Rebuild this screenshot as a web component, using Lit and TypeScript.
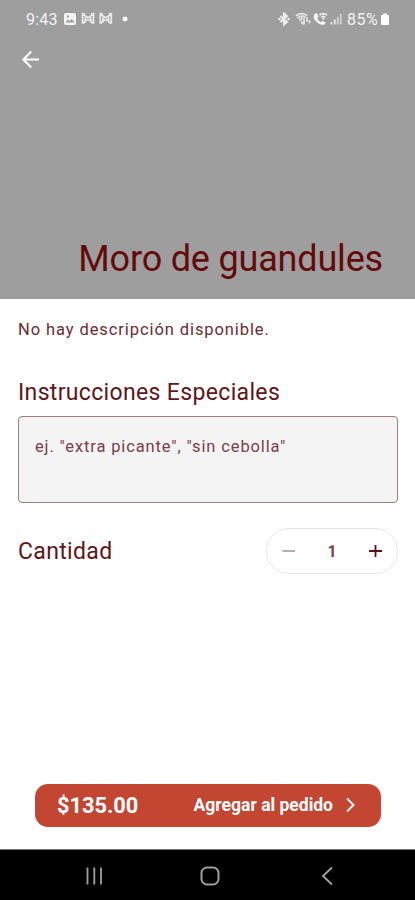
import { LitElement, html, css, svg } from "lit";
import { customElement, state } from "lit/decorators.js";

const mail = svg`<path d="M1.500 12V2.500L7 6.500 12.500 2.500V12M1.500 2.500 4 2.200M12.500 2.500 10 2.200M4.200 6v4.200L1.500 12M9.800 6v4.200l2.700 1.800M4.200 9.500Q7 7.500 9.800 9.500" />`;

@customElement("app-root")
export class AppRoot extends LitElement {
  @state() private quantity = 1;

  static styles = css`
    :host {
      display: flex;
      flex-direction: column;
      width: 415px;
      height: 900px;
      overflow: hidden;
      background: #fefefe;
      color: #5f161a;
      font-family: Roboto, "Liberation Sans", sans-serif;
    }
    * { box-sizing: border-box; }
    svg { display: block; flex: none; fill: none; }
    button {
      padding: 0;
      border: 0;
      background: none;
      font: inherit;
      color: inherit;
      display: flex;
    }
    .hero {
      height: 299px;
      flex: none;
      display: flex;
      flex-direction: column;
      background: #9e9e9e;
      color: #fff;
    }
    .status {
      height: 38px;
      display: flex;
      align-items: center;
      padding: 0 25px 0 26px;
      font-size: 16px;
      color: #f3f3f3;
    }
    .clock { width: 37px; letter-spacing: 0.2px; }
    .spacer { flex: 1; }
    .percent { width: 33px; letter-spacing: 0.5px; white-space: nowrap; }
    .back { margin: 9px 0 0 19px; width: 24px; }
    h1 {
      margin: auto 32px 18px 0;
      text-align: right;
      font-size: 36px;
      line-height: 44px;
      font-weight: 400;
      letter-spacing: -0.18px;
      color: #640a0a;
      white-space: nowrap;
    }
    .content {
      flex: 1;
      display: flex;
      flex-direction: column;
      padding: 21px 17px 22px 18px;
    }
    p {
      margin: 0;
      font-size: 16.5px;
      line-height: 20px;
      letter-spacing: 0.91px;
      color: #6d2a2f;
    }
    h2 {
      margin: 0;
      font-size: 23px;
      line-height: 28px;
      font-weight: 400;
      letter-spacing: 0.34px;
    }
    .instructions { margin-top: 39px; }
    .field {
      height: 87px;
      margin-top: 9px;
      padding: 20px 16px;
      border: 1px solid #a17c80;
      border-radius: 4px;
      background: #f4f4f4;
      font-size: 16.5px;
      line-height: 20px;
      letter-spacing: 0.87px;
      white-space: nowrap;
      color: #7b4046;
    }
    .row {
      display: flex;
      align-items: center;
      justify-content: space-between;
      margin-top: 25px;
    }
    .row h2 { padding-top: 1px; }
    .stepper {
      width: 132px;
      height: 46px;
      padding: 0 14px;
      border: 1px solid #e9e7e7;
      border-radius: 23px;
      display: flex;
      align-items: center;
      justify-content: space-between;
    }
    .count { font-size: 16px; font-weight: 700; color: #7a4548; }
    .add {
      margin: auto 17px 0;
      height: 43px;
      padding: 0 20px 1px 22px;
      border-radius: 13px;
      background: #c34632;
      color: #fff;
      display: flex;
      align-items: center;
      font-weight: 700;
    }
    .price { font-size: 21.8px; }
    .label { font-size: 17.5px; margin-left: auto; }
    .chevron { margin-left: 12px; }
    .nav {
      height: 51px;
      flex: none;
      padding: 1px 79px 0 82px;
      border-top: 1px solid #777;
      background: #000;
      display: flex;
      align-items: center;
      justify-content: space-between;
    }
    .home { margin-right: 6px; }
  `;

  private step(by: number) {
    this.quantity = Math.max(1, this.quantity + by);
  }

  render() {
    return html`
      <header class="hero">
        <div class="status">
          <span class="clock">9:43</span>
          <svg width="66" height="14" viewBox="0 0 66 14">
            <path fill="#f3f3f3" fill-rule="evenodd" d="M3 1h8a2 2 0 0 1 2 2v8a2 2 0 0 1-2 2H3a2 2 0 0 1-2-2V3a2 2 0 0 1 2-2ZM2.500 10.500h9L8.800 7 6.800 9 5 7.500ZM4 3.500v2h2v-2Z" />
            <g stroke="#ececec" stroke-width="1.700" transform="translate(18 -.5)">${mail}</g>
            <g stroke="#ececec" stroke-width="1.700" transform="translate(35.800 -.5)">${mail}</g>
            <circle cx="62" cy="7" r="2.500" fill="#f5f5f5" />
          </svg>
          <span class="spacer"></span>
          <svg width="69" height="16" viewBox="0 0 69 16">
            <path stroke="#f0f0f0" stroke-width="1.900" d="M2.500 5 9 11 6 13.500V2.500L9 5 2.500 11" />
            <g fill="#f0f0f0"><circle cx="1.500" cy="8" r="1.300" /><circle cx="10.500" cy="8" r="1.300" /></g>
            <g stroke="#e6e6e6" stroke-width="1.800" stroke-linecap="round">
              <path d="M18.500 4.500Q23.500 1 28.500 4M20 7Q23.500 4 27 6M22 9l2-1.500" />
              <path d="M26 8v5M29 7v3M31.500 10v1.500M23.500 11l1 1.500" />
            </g>
            <path fill="#f4f4f4" d="M36.500 3 38.500 2 40.700 5.500 39.200 7.500Q40.500 10 43 11.200L44.500 9.700 47.700 11.700 46.700 13.200Q44.500 14.500 41.500 13 35.500 9.300 35.500 5.500Z" />
            <path stroke="#ededed" stroke-width="1.800" d="M41.500 4Q45.200 1.200 49 4M43.300 6.200Q45.200 4.700 47.200 6.200" />
            <path fill="#f1f1f1" d="m44 7.700 1.300-1.200 1.200 1.200-1.200 1.500Z" />
            <g fill="#e6e6e6"><path d="M52.500 11h1.900v2.500h-1.900ZM55.800 8.500h1.900v5h-1.900Z" /><path opacity=".65" d="M58.900 6h1.900v7.500h-1.900ZM61.800 3h1.900v10.500h-1.900Z" /></g>
          </svg>
          <span class="percent">85%</span>
          <svg width="10" height="14" viewBox="0 0 10 14"><path fill="#fff" d="M3 1.500h4v1.500h1q1 0 1 1V12q0 1-1 1H2q-1 0-1-1V4q0-1 1-1h1Z" /></svg>
        </div>
        <button class="back" aria-label="Atrás">
          <svg width="24" height="24" viewBox="0 0 24 24"><path stroke="#fff" stroke-width="2" d="M20 12.500H4.500M12.300 4.500l-8 8 8 8" /></svg>
        </button>
        <h1>Moro de guandules</h1>
      </header>
      <main class="content">
        <p>No hay descripción disponible.</p>
        <h2 class="instructions">Instrucciones Especiales</h2>
        <div class="field">ej. "extra picante", "sin cebolla"</div>
        <div class="row">
          <h2>Cantidad</h2>
          <div class="stepper">
            <button aria-label="Menos" @click=${() => this.step(-1)}>
              <svg width="16" height="16" viewBox="0 0 16 16"><path stroke="#ad8e91" stroke-width="1.500" d="M1.500 8H14" /></svg>
            </button>
            <span class="count">${this.quantity}</span>
            <button aria-label="Más" @click=${() => this.step(1)}>
              <svg width="16" height="16" viewBox="0 0 16 16"><path stroke="#5f0d10" stroke-width="1.800" d="M2 8h13M8.500 2v12" /></svg>
            </button>
          </div>
        </div>
        <button class="add">
          <span class="price">$135.00</span>
          <span class="label">Agregar al pedido</span>
          <svg class="chevron" width="16" height="18" viewBox="0 0 16 18"><path stroke="#fff" stroke-width="1.900" d="m2 2.500 6.500 6.500L2 15.500" /></svg>
        </button>
      </main>
      <nav class="nav">
        <svg width="24" height="20" viewBox="0 0 24 20"><path stroke="#a0a0a0" stroke-width="1.800" d="M5.500 1.500v17M12.300 1.500v17M19 1.500v17" /></svg>
        <svg class="home" width="20" height="20" viewBox="0 0 20 20"><rect x="1.500" y="1.500" width="17" height="17" rx="5.500" stroke="#a0a0a0" stroke-width="2" /></svg>
        <svg width="16" height="20" viewBox="0 0 16 20"><path stroke="#a0a0a0" stroke-width="1.900" d="M12 1.500 3 10l9 8.500" /></svg>
      </nav>
    `;
  }
}
